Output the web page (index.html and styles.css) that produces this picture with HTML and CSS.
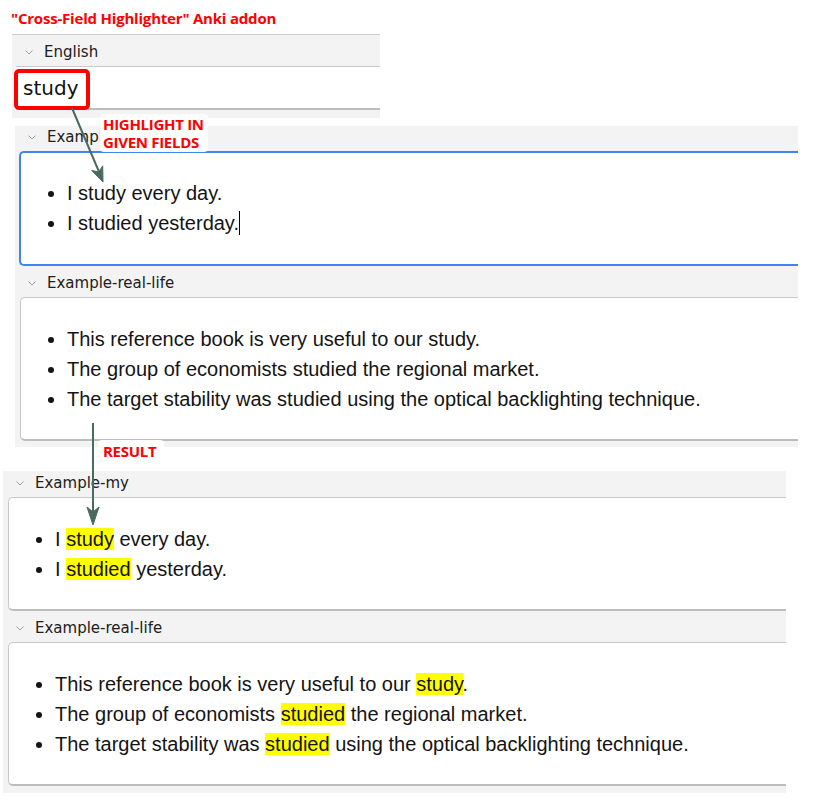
FILE: index.html
```html
<!DOCTYPE html>
<html>
<head>
<meta charset="utf-8">
<link rel="stylesheet" href="styles.css">
</head>
<body>
<div class="page">
  <div class="title">"Cross-Field Highlighter" Anki addon</div>

  <section class="panel panel-a">
    <div class="hdr"><svg class="chev" viewBox="0 0 8 5"><path d="M0.5 0.5 L4 4 L7.5 0.5" /></svg><span>English</span></div>
    <div class="field plain-field"><div class="word">study</div></div>
  </section>

  <section class="panel panel-b">
    <div class="hdr crop"><svg class="chev" viewBox="0 0 8 5"><path d="M0.5 0.5 L4 4 L7.5 0.5" /></svg><span class="hidden-under">Example-my</span></div>
    <div class="field focused">
      <ul>
        <li>I study every day.</li>
        <li>I studied yesterday.<span class="caret"></span></li>
      </ul>
    </div>
    <div class="hdr"><svg class="chev" viewBox="0 0 8 5"><path d="M0.5 0.5 L4 4 L7.5 0.5" /></svg><span>Example-real-life</span></div>
    <div class="field">
      <ul>
        <li>This reference book is very useful to our study.</li>
        <li>The group of economists studied the regional market.</li>
        <li>The target stability was studied using the optical backlighting technique.</li>
      </ul>
    </div>
  </section>

  <section class="panel panel-c">
    <div class="hdr crop"><svg class="chev" viewBox="0 0 8 5"><path d="M0.5 0.5 L4 4 L7.5 0.5" /></svg><span>Example-my</span></div>
    <div class="field">
      <ul>
        <li>I <mark>study</mark> every day.</li>
        <li>I <mark>studied</mark> yesterday.</li>
      </ul>
    </div>
    <div class="hdr"><svg class="chev" viewBox="0 0 8 5"><path d="M0.5 0.5 L4 4 L7.5 0.5" /></svg><span>Example-real-life</span></div>
    <div class="field">
      <ul>
        <li>This reference book is very useful to our <mark>study</mark>.</li>
        <li>The group of economists <mark>studied</mark> the regional market.</li>
        <li>The target stability was <mark>studied</mark> using the optical backlighting technique.</li>
      </ul>
    </div>
  </section>

  <div class="redbox"></div>
  <div class="label label-hl">HIGHLIGHT IN<br>GIVEN FIELDS</div>
  <div class="label label-res">RESULT</div>

  <svg class="arrows" width="816" height="807" viewBox="0 0 816 807">
    <line x1="72" y1="108" x2="99.5" y2="173" />
    <polygon points="103,182 91.7,170.5 98.8,171.9 102.7,165.9" />
    <line x1="93" y1="423" x2="93" y2="513" />
    <polygon points="93,525 87,507 93,512 99,507" />
  </svg>
</div>
</body>
</html>
```

FILE: styles.css
```css
html, body {
  margin: 0;
  padding: 0;
  background: #ffffff;
}

.page {
  position: relative;
  width: 816px;
  height: 807px;
  overflow: hidden;
}

.title {
  padding: 8px 0 0 11px;
  height: 20px;
  line-height: 20px;
  font-family: "Open Sans", sans-serif;
  font-weight: 700;
  font-size: 15px;
  color: #ff0000;
  letter-spacing: -0.2px;
}

.panel {
  background: #f3f3f3;
  display: flex;
  flex-direction: column;
  overflow: hidden;
}

.panel-a {
  margin: 6px 0 0 12px;
  width: 368px;
  border-top: 1px solid #cfcfcf;
  padding-bottom: 8px;
}

.panel-b {
  margin: 8px 0 0 15px;
  width: 783px;
  padding-bottom: 6px;
}

.panel-c {
  margin: 24px 0 0 3px;
  width: 783px;
  padding-bottom: 7px;
}

.hdr {
  height: 31px;
  flex: none;
  display: flex;
  align-items: center;
  font-family: "DejaVu Sans", sans-serif;
  font-size: 15px;
  color: #202020;
  padding-top: 2px;
  box-sizing: border-box;
}

.hdr.crop {
  margin-top: -6px;
}

.panel-c .hdr.crop {
  margin-top: -5px;
}

.hidden-under {
  max-width: 53px;
  overflow: hidden;
  white-space: nowrap;
}

.chev {
  width: 8px;
  height: 5px;
  margin: 2px 11px 0 13px;
  fill: none;
  stroke: #a0a0a0;
  stroke-width: 1;
}

.field {
  margin-left: 5px;
  background: #ffffff;
  border-top: 1px solid #c9c9c9;
  border-left: 1px solid #c9c9c9;
  border-bottom: 2px solid #bdbdbd;
  border-radius: 5px 0 0 5px;
  padding: 6px 7px 5px 6px;
  font-family: "Liberation Sans", Arial, sans-serif;
  font-size: 20px;
  color: #141414;
}

.field.focused {
  margin-left: 4px;
  border: 2px solid #3f85f2;
  border-right: none;
  padding: 5px 7px 6px 6px;
}

.plain-field {
  margin-left: 4px;
  border-left: none;
  border-radius: 0;
  padding-left: 7px;
}

.word {
  font-family: "DejaVu Sans", sans-serif;
  font-size: 20px;
  line-height: 30px;
  color: #111;
}

.field ul {
  margin: 20px 0;
  padding-left: 40px;
}

.field li {
  line-height: 30px;
}

mark {
  background: #ffff00;
  color: #141414;
}

.caret {
  display: inline-block;
  width: 0;
  height: 24px;
  border-left: 1px solid #000;
  vertical-align: -5px;
}

.redbox {
  position: absolute;
  left: 14px;
  top: 69px;
  width: 76px;
  height: 41px;
  box-sizing: border-box;
  border: 4px solid #ff0000;
  border-radius: 5px;
}

.label {
  position: absolute;
  background: #ffffff;
  border-radius: 4px;
  font-family: "Open Sans", sans-serif;
  font-weight: 700;
  font-size: 15px;
  color: #ff0000;
  line-height: 18px;
  letter-spacing: -0.3px;
  box-sizing: border-box;
  white-space: nowrap;
}

.label-hl {
  left: 100px;
  top: 114px;
  width: 108px;
  height: 38px;
  padding: 1px 0 0 3px;
}

.label-res {
  left: 98px;
  top: 440px;
  width: 66px;
  height: 22px;
  padding: 2px 0 0 5px;
}

.arrows {
  position: absolute;
  left: 0;
  top: 0;
  pointer-events: none;
}

.arrows line {
  stroke: #486a5f;
  stroke-width: 2;
}

.arrows polygon {
  fill: #486a5f;
  stroke: #486a5f;
  stroke-width: 1;
  stroke-linejoin: round;
}
```
